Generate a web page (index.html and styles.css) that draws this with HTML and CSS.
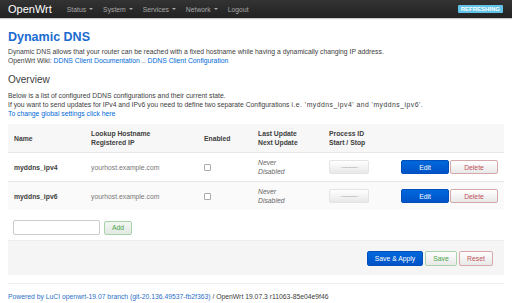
FILE: index.html
```html
<!DOCTYPE html>
<html lang="en">
<head>
  <meta charset="UTF-8" />
  <meta name="viewport" content="width=device-width, initial-scale=1.0"/>
  <title>Dynamic DNS - LuCI</title>
  <link rel="stylesheet" href="styles.css">
</head>
<body>
  <header class="navbar">
    <a class="brand">OpenWrt</a>
    <nav class="menu">
      <span class="menu-item">Status<i class="caret"></i></span>
      <span class="menu-item">System<i class="caret"></i></span>
      <span class="menu-item">Services<i class="caret"></i></span>
      <span class="menu-item">Network<i class="caret"></i></span>
      <span class="menu-item">Logout</span>
    </nav>
    <span class="badge">REFRESHING</span>
  </header>

  <main>
    <h2 class="page-title">Dynamic DNS</h2>
    <div class="desc">
      Dynamic DNS allows that your router can be reached with a fixed hostname while having a dynamically changing IP address.<br>
      OpenWrt Wiki: <a>DDNS Client Documentation</a> <span class="sep">—</span> <a>DDNS Client Configuration</a>
    </div>

    <h3 class="section-title">Overview</h3>
    <div class="desc">
      Below is a list of configured DDNS configurations and their current state.<br>
      If you want to send updates for IPv4 and IPv6 you need to define two separate Configurations <span class="wide">i.e. 'myddns_ipv4' and 'myddns_ipv6'.</span><br>
      <a>To change global settings click here</a>
    </div>

    <table class="cbi-table">
      <colgroup>
        <col style="width:77px">
        <col style="width:113px">
        <col style="width:54px">
        <col style="width:71px">
        <col style="width:72px">
        <col>
      </colgroup>
      <tr class="head">
        <th>Name</th>
        <th>Lookup Hostname<br>Registered IP</th>
        <th>Enabled</th>
        <th>Last Update<br>Next Update</th>
        <th>Process ID<br>Start / Stop</th>
        <th></th>
      </tr>
      <tr>
        <td class="name">myddns_ipv4</td>
        <td class="muted">yourhost.example.com</td>
        <td><span class="checkbox"></span></td>
        <td class="state">Never<br>Disabled</td>
        <td><button class="btn btn-pid">————</button></td>
        <td class="actions"><button class="btn btn-edit">Edit</button><button class="btn btn-negative btn-del">Delete</button></td>
      </tr>
      <tr class="alt">
        <td class="name">myddns_ipv6</td>
        <td class="muted">yourhost.example.com</td>
        <td><span class="checkbox"></span></td>
        <td class="state">Never<br>Disabled</td>
        <td><button class="btn btn-pid">————</button></td>
        <td class="actions"><button class="btn btn-edit">Edit</button><button class="btn btn-negative btn-del">Delete</button></td>
      </tr>
    </table>

    <div class="add-row">
      <input class="text-input" type="text">
      <button class="btn btn-positive btn-add">Add</button>
    </div>

    <div class="page-actions">
      <button class="btn btn-edit btn-apply">Save &amp; Apply</button>
      <button class="btn btn-positive btn-save">Save</button>
      <button class="btn btn-negative btn-reset">Reset</button>
    </div>

    <footer class="footer">
      <a>Powered by LuCI openwrt-19.07 branch (git-20.136.49537-fb2f363)</a> / OpenWrt 19.07.3 r11063-85e04e9f46
    </footer>
  </main>
</body>
</html>
```

FILE: styles.css
```css
body {
  margin: 0;
  font-family: "Liberation Sans", Arial, sans-serif;
  font-size: 6.8px;
  line-height: 9px;
  color: #404040;
  background: #fff;
}
a {
  color: #0069d6;
}
.navbar {
  height: 18px;
  display: flex;
  align-items: center;
  padding: 0 9px 0 8px;
  background: linear-gradient(#333, #222);
  box-shadow: 0 1px 1px rgba(0, 0, 0, 0.2);
}
.brand {
  color: #fff;
  font-size: 11px;
  margin-right: 15px;
}
.menu {
  display: flex;
  flex: 1;
}
.menu-item {
  color: #a8a8a8;
  font-size: 6.8px;
  margin-right: 10px;
  display: flex;
  align-items: center;
}
.caret {
  display: inline-block;
  width: 0;
  height: 0;
  margin-left: 3px;
  border-left: 2px solid transparent;
  border-right: 2px solid transparent;
  border-top: 2px solid #a8a8a8;
}
.badge {
  background: #62c3e6;
  color: #fff;
  font-size: 6px;
  font-weight: bold;
  line-height: 8px;
  padding: 0 3px;
  border-radius: 1px;
}
main {
  padding: 0 8px;
}
.page-title {
  margin: 10px 0 1px;
  font-size: 12.5px;
  line-height: 18px;
  color: #1a6bd0;
}
.section-title {
  margin: 7px 0 5px;
  font-size: 10px;
  line-height: 13px;
  font-weight: normal;
  color: #404040;
}
.sep {
  font-size: 4px;
}
.wide {
  letter-spacing: 0.5px;
}
.cbi-table {
  width: 496px;
  margin-top: 6px;
  border-collapse: collapse;
  table-layout: fixed;
}
.cbi-table th,
.cbi-table td {
  height: 28px;
  padding: 0 6px;
  text-align: left;
  vertical-align: middle;
  border-top: 1px solid #e8e8e8;
}
.cbi-table th {
  font-weight: bold;
  background: #f7f7f7;
  border-top: none;
}
.cbi-table .alt td {
  background: #fafafa;
}
.name {
  font-weight: bold;
}
.muted {
  color: #777;
}
.state {
  font-style: italic;
  color: #666;
}
.checkbox {
  display: block;
  width: 5px;
  height: 5px;
  border: 1px solid #aaa;
  border-radius: 1px;
  background: #fff;
}
.btn {
  font-family: "Liberation Sans", Arial, sans-serif;
  font-size: 6.8px;
  height: 15px;
  padding: 0 4px;
  border-radius: 2px;
  border: 1px solid #ccc;
  background: linear-gradient(#fff, #e8e8e8);
  color: #404040;
  cursor: pointer;
}
.btn-pid {
  width: 40px;
  height: 14px;
  color: #999;
  border-color: #e4e4e4;
  font-size: 5px;
  letter-spacing: -1px;
}
.actions {
  white-space: nowrap;
}
.btn-edit {
  background: linear-gradient(#0068dc, #0053c6);
  border-color: #004fba;
  color: #fff;
}
.actions .btn-edit {
  width: 48px;
  height: 14px;
  margin-right: 1px;
}
.btn-negative {
  color: #c0505a;
  border-color: #d6a8ab;
}
.btn-del {
  width: 48px;
  height: 14px;
}
.btn-positive {
  color: #4aa54a;
  border-color: #a9d3a9;
}
.add-row {
  display: flex;
  align-items: center;
  gap: 4px;
  padding: 10px 0 0 5px;
}
.text-input {
  width: 87px;
  height: 15px;
  box-sizing: border-box;
  border: 1px solid #ccc;
  border-radius: 2px;
  padding: 0 3px;
}
.btn-add {
  width: 28px;
  height: 14px;
  background: linear-gradient(#f4f6f4, #e2e8e2);
}
.page-actions {
  margin-top: 5px;
  height: 35px;
  display: flex;
  align-items: center;
  justify-content: flex-end;
  gap: 2px;
  padding-right: 11px;
  background: #f5f5f5;
  border-top: 1px solid #eee;
  box-sizing: border-box;
}
.btn-apply {
  width: 56px;
}
.btn-save {
  width: 32px;
}
.btn-reset {
  width: 34px;
}
.footer {
  margin-top: 8px;
  padding-top: 8px;
  border-top: 1px solid #eee;
  color: #404040;
}
.footer a {
  color: #2c6fc6;
}
```
